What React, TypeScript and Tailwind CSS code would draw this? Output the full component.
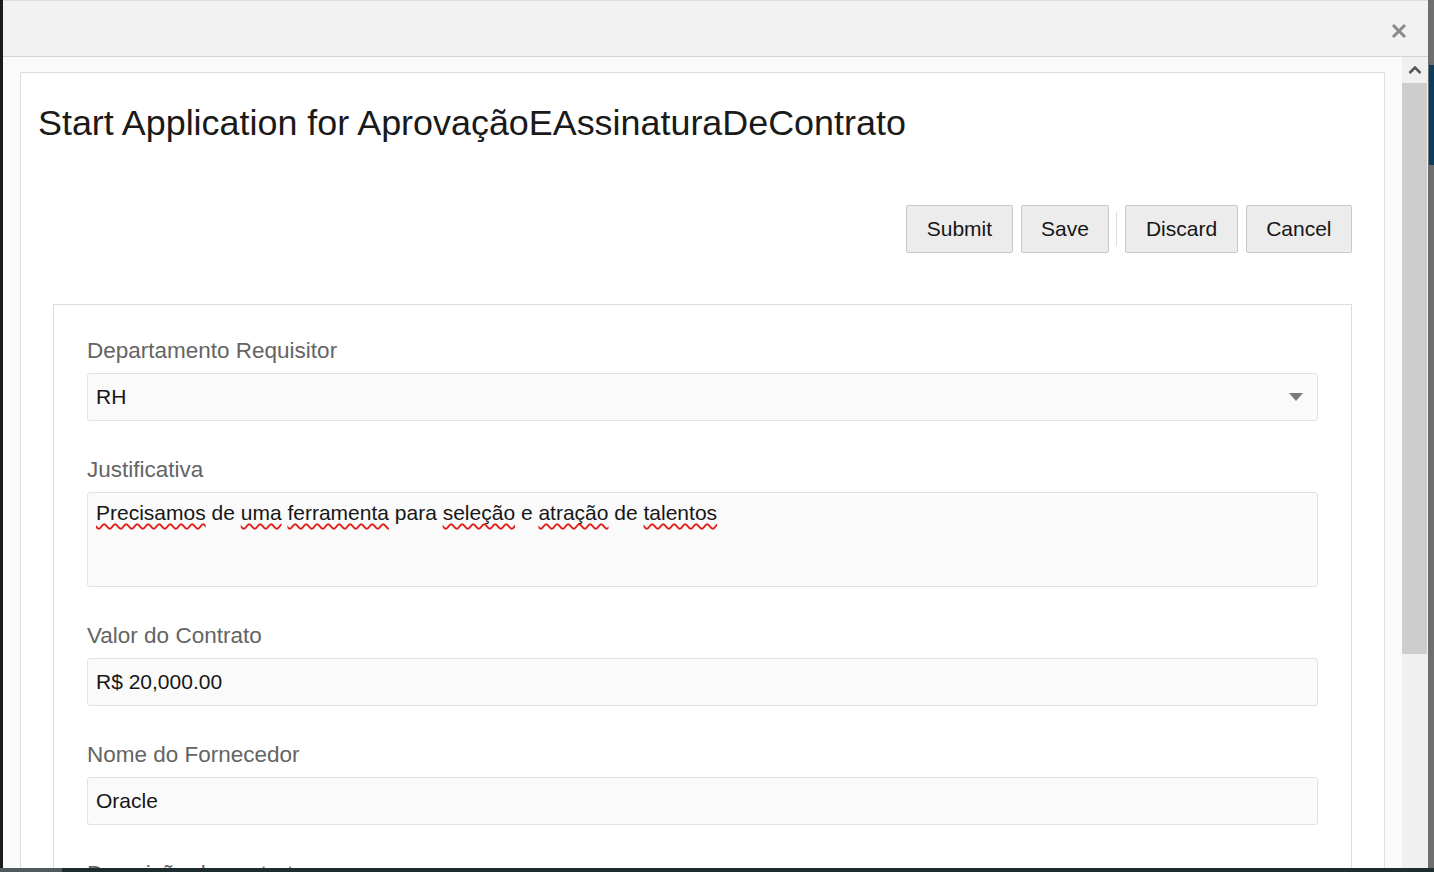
import React from "react";

const Wavy = ({ children }: { children: React.ReactNode }) => (
  <span className="underline decoration-wavy decoration-[#e0201a] decoration-[1.5px] underline-offset-[3px] [text-decoration-skip-ink:none]">{children}</span>
);

function Field({ label, children }: { label: string; children: React.ReactNode }) {
  return (
    <div className="mb-[34px]">
      <div className="text-[22.5px] leading-[30px] text-[#646464] mb-[7px]">{label}</div>
      {children}
    </div>
  );
}

function Input({ value, select }: { value: string; select?: boolean }) {
  return (
    <div className="h-[48px] bg-[#fafafa] border border-[#e2e2e2] rounded-[3px] flex items-center px-[8px] text-[21px] text-[#161616]">
      <span className="flex-1">{value}</span>
      {select && (
        <svg width="16" height="10" viewBox="0 0 16 10" className="mr-[5px]">
          <path d="M1 1 L15 1 L8 9 Z" fill="#7a7a7a" />
        </svg>
      )}
    </div>
  );
}

function Btn({ children }: { children: React.ReactNode }) {
  return (
    <div className="h-[48px] px-[19.5px] flex items-center bg-[#ececec] border border-[#c9c9c9] rounded-[2px] text-[21px] text-[#161616]">
      {children}
    </div>
  );
}

export default function App() {
  return (
    <div className="w-[1434px] h-[872px] overflow-hidden flex flex-col font-['Liberation_Sans',Arial,sans-serif]">
      <div className="flex h-[868px]">
        <div className="w-[3px] bg-[#1c1c1c]" />
        <div className="flex-1 flex flex-col min-w-0">
          <div className="h-[57px] shrink-0 bg-[#f2f2f2] border-t border-[#dcdcdc] border-b border-b-[#d4d4d4] flex items-start justify-end pt-[22px] pr-[21px]">
            <svg width="16" height="16" viewBox="0 0 16 16">
              <path d="M2 2 L14 14 M14 2 L2 14" stroke="#8a8a8a" strokeWidth="3" />
            </svg>
          </div>
          <div className="flex-1 flex min-h-0">
            <div className="flex-1 overflow-hidden bg-[#fafafa] pl-[17px] pr-[17px] pt-[15px]">
              <div className="bg-white border border-[#dddddd] h-[900px]">
                <div className="px-[17px] pt-[29px] text-[35.9px] leading-[43px] text-[#1a1a1a]">
                  Start Application for AprovaçãoEAssinaturaDeContrato
                </div>
                <div className="px-[32px]">
                  <div className="flex justify-end items-center mt-[60px] gap-[8px]">
                    <Btn>Submit</Btn>
                    <Btn>Save</Btn>
                    <div className="w-[1px] h-[34px] bg-[#dedede] -ml-[1px]" />
                    <Btn>Discard</Btn>
                    <Btn>Cancel</Btn>
                  </div>
                  <div className="mt-[51px] border border-[#d6dfe6] px-[33px] pt-[31px] h-[700px]">
                    <Field label="Departamento Requisitor">
                      <Input value="RH" select />
                    </Field>
                    <Field label="Justificativa">
                      <div className="h-[95px] bg-[#fafafa] border border-[#e2e2e2] rounded-[3px] px-[8px] pt-[7px] text-[21px] leading-[26px] text-[#161616]">
                        <Wavy>Precisamos</Wavy> de <Wavy>uma</Wavy> <Wavy>ferramenta</Wavy> para <Wavy>seleção</Wavy> e <Wavy>atração</Wavy> de <Wavy>talentos</Wavy>
                      </div>
                    </Field>
                    <Field label="Valor do Contrato">
                      <Input value="R$ 20,000.00" />
                    </Field>
                    <Field label="Nome do Fornecedor">
                      <Input value="Oracle" />
                    </Field>
                    <Field label="Descrição do contrato">
                      <Input value="" />
                    </Field>
                  </div>
                </div>
              </div>
            </div>
            <div className="w-[26px] shrink-0 bg-[#f0f0f0] flex flex-col">
              <div className="h-[26px] flex items-center justify-center">
                <svg width="14" height="10" viewBox="0 0 14 10">
                  <path d="M1.5 8 L7 2.5 L12.5 8" stroke="#555" strokeWidth="2.5" fill="none" />
                </svg>
              </div>
              <div className="h-[571px] bg-[#cdcdcd] mr-[1px]" />
            </div>
          </div>
        </div>
        <div className="w-[6px] bg-[#6e6e6e] flex flex-col">
          <div className="h-[65px]" />
          <div className="h-[100px] bg-[#0c3d5e] ml-[1px]" />
        </div>
      </div>
      <div className="h-[4px] flex">
        <div className="w-[62px] bg-[#4e5a5c]" />
        <div className="flex-1 bg-[#1e2c2f]" />
      </div>
    </div>
  );
}
